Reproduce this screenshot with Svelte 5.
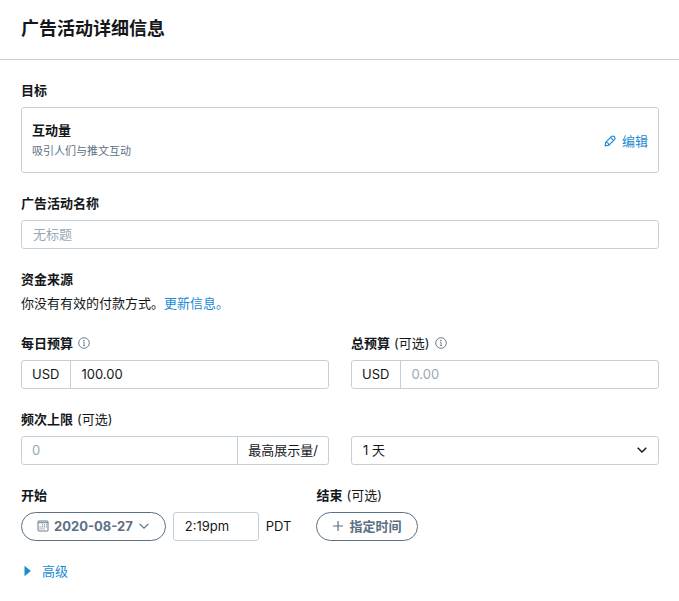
<script lang="ts">
	let campaignName = $state('');
	let dailyBudget = $state('100.00');
	let totalBudget = $state('');
	let frequencyCap = $state('');
	let period = $state('1');
	let startTime = $state('2:19pm');

	const periods = [
		{ value: '1', label: '1 天' },
		{ value: '7', label: '7 天' },
		{ value: '30', label: '30 天' }
	];
</script>

{#snippet infoIcon()}
	<svg class="info-icon" viewBox="0 0 12 12" width="12" height="12" aria-hidden="true">
		<circle cx="6" cy="6" r="5.3" fill="none" stroke="currentColor" stroke-width="0.9" />
		<path d="M5 5.2h1.1v3.3M5 8.6h2.2" fill="none" stroke="currentColor" stroke-width="0.8" />
		<circle cx="5.9" cy="3.5" r="0.7" fill="currentColor" />
	</svg>
{/snippet}

<div class="page">
	<header class="page-header">
		<h1>广告活动详细信息</h1>
	</header>

	<main class="form">
		<section class="field">
			<h2 class="label">目标</h2>
			<div class="objective">
				<div>
					<div class="objective-title">互动量</div>
					<div class="objective-text">吸引人们与推文互动</div>
				</div>
				<button class="edit-btn" type="button">
					<svg viewBox="0 0 12 12" width="12" height="12" aria-hidden="true">
						<g fill="none" stroke="currentColor" stroke-width="1.1" stroke-linejoin="round">
							<path d="M1.1 10.9l.6-3.6 5.8-5.8a1.9 1.9 0 0 1 2.7 0l.3.3a1.9 1.9 0 0 1 0 2.7l-5.8 5.8z" />
							<path d="M7.1 3.1l1.8 1.8M1.7 7.3c1.6 0 3 1.4 3 3" />
						</g>
					</svg>
					<span>编辑</span>
				</button>
			</div>
		</section>

		<div class="field">
			<label class="label" for="name">广告活动名称</label>
			<input id="name" class="control" type="text" placeholder="无标题" bind:value={campaignName} />
		</div>

		<section class="funding">
			<h2 class="label">资金来源</h2>
			<p>你没有有效的付款方式。<a href="#payment">更新信息。</a></p>
		</section>

		<div class="columns">
			<div class="field">
				<label class="label" for="daily">每日预算 {@render infoIcon()}</label>
				<div class="group">
					<span class="addon">USD</span>
					<input id="daily" type="text" bind:value={dailyBudget} />
				</div>
			</div>
			<div class="field">
				<label class="label" for="total">
					总预算 <span class="optional">(可选)</span>
					{@render infoIcon()}
				</label>
				<div class="group">
					<span class="addon">USD</span>
					<input id="total" type="text" placeholder="0.00" bind:value={totalBudget} />
				</div>
			</div>
		</div>

		<div class="field">
			<label class="label" for="cap">频次上限 <span class="optional">(可选)</span></label>
			<div class="columns">
				<div class="group">
					<input id="cap" type="text" placeholder="0" bind:value={frequencyCap} />
					<span class="addon addon-end">最高展示量/</span>
				</div>
				<div class="select-wrapper">
					<select class="control" aria-label="频次上限" bind:value={period}>
						{#each periods as item}
							<option value={item.value}>{item.label}</option>
						{/each}
					</select>
					<svg class="chevron" viewBox="0 0 12 12" width="12" height="12" aria-hidden="true">
						<path d="M1.7 3.8L6 8.1l4.3-4.3" fill="none" stroke="currentColor" stroke-width="1.4" />
					</svg>
				</div>
			</div>
		</div>

		<div class="schedule">
			<div class="field">
				<label class="label" for="start">开始</label>
				<div class="start-row">
					<button id="start" class="pill" type="button">
						<svg viewBox="0 0 12 12" width="12" height="12" aria-hidden="true">
							<rect x="1" y="1" width="10" height="10" rx="0.6" fill="none" stroke="currentColor" stroke-width="0.9" />
							<path d="M1 2.7h10" stroke="currentColor" stroke-width="0.9" />
							<path d="M4.8 4.9h5M2.5 6.9h7.3M2.5 8.9h5" stroke="currentColor" stroke-dasharray="1.1 1" />
						</svg>
						<span>2020-08-27</span>
						<svg viewBox="0 0 12 12" width="12" height="12" aria-hidden="true">
							<path d="M1.6 3.9L6 8.2l4.4-4.3" fill="none" stroke="currentColor" stroke-width="1.2" />
						</svg>
					</button>
					<input class="control time" type="text" aria-label="开始时间" bind:value={startTime} />
					<span class="zone">PDT</span>
				</div>
			</div>
			<div class="field">
				<label class="label" for="end">结束 <span class="optional">(可选)</span></label>
				<button id="end" class="pill" type="button">
					<svg viewBox="0 0 12 12" width="12" height="12" aria-hidden="true">
						<path d="M6 1v10M1 6h10" stroke="currentColor" stroke-width="1.2" />
					</svg>
					<span>指定时间</span>
				</button>
			</div>
		</div>

		<button class="advanced" type="button" aria-expanded="false">
			<svg viewBox="0 0 7 12" width="7" height="12" aria-hidden="true">
				<path d="M0.5 0.8L6.8 6 0.5 11.2z" fill="currentColor" />
			</svg>
			<span>高级</span>
		</button>
	</main>
</div>

<style>
	.page {
		--text: #14171a;
		--muted: #5b7083;
		--border: #c3d0da;
		--blue: #1a8ad6;
		min-height: 100vh;
		background: #fff;
		color: var(--text);
		font-family: Inter, 'Noto Sans CJK SC', sans-serif;
		font-size: 13px;
		line-height: 20px;
	}

	.page *,
	.page {
		box-sizing: border-box;
	}

	button,
	input,
	select {
		font: inherit;
		color: inherit;
		margin: 0;
	}

	button {
		cursor: pointer;
	}

	.page-header {
		padding: 16px 20px 17px 21px;
		border-bottom: 1px solid var(--border);
	}

	h1 {
		margin: 0;
		font-size: 18px;
		line-height: 26px;
		font-weight: 700;
	}

	.form {
		display: flex;
		flex-direction: column;
		gap: 20px;
		padding: 20px 20px 20px 21px;
	}

	.field {
		display: flex;
		flex-direction: column;
		gap: 7px;
		min-width: 0;
	}

	.label {
		display: flex;
		align-items: center;
		gap: 4px;
		margin: 0;
		font-size: 13px;
		line-height: 20px;
		font-weight: 700;
	}

	.optional {
		font-weight: 400;
	}

	.info-icon {
		margin-left: 1px;
		color: var(--muted);
	}

	.objective {
		display: flex;
		align-items: center;
		justify-content: space-between;
		padding: 12px 10px 11px;
		border: 1px solid var(--border);
		border-radius: 3px;
	}

	.objective-title {
		font-weight: 700;
	}

	.objective-text {
		margin-top: 1px;
		color: var(--muted);
		font-size: 11px;
	}

	.edit-btn,
	.advanced {
		display: flex;
		align-items: center;
		gap: 6px;
		padding: 0;
		border: 0;
		background: none;
		color: var(--blue);
	}

	.control,
	.group {
		width: 100%;
		height: 29px;
		border: 1px solid var(--border);
		border-radius: 3px;
		background: #fff;
	}

	.control {
		padding: 0 11px 2px;
	}

	input::placeholder {
		color: #97a9b6;
		opacity: 1;
	}

	.funding {
		display: flex;
		flex-direction: column;
		gap: 4px;
	}

	p {
		margin: 0;
	}

	a {
		color: var(--blue);
		text-decoration: none;
	}

	.columns {
		display: grid;
		grid-template-columns: 1fr 1fr;
		gap: 22px;
	}

	.group {
		display: flex;
		min-width: 0;
	}

	.group input {
		flex: 1;
		min-width: 0;
		padding: 0 10px 1px;
		border: 0;
		background: none;
	}

	.addon {
		display: flex;
		align-items: center;
		padding: 0 11px 1px 10px;
		border-right: 1px solid var(--border);
	}

	.addon-end {
		padding: 0 10px 1px;
		border-right: 0;
		border-left: 1px solid var(--border);
	}

	.select-wrapper {
		position: relative;
	}

	select {
		display: block;
		appearance: none;
	}

	.chevron {
		position: absolute;
		top: 8px;
		right: 11px;
		pointer-events: none;
	}

	.schedule {
		display: flex;
		flex-wrap: wrap;
		gap: 25px;
	}

	.start-row {
		display: flex;
		align-items: center;
		gap: 7px;
	}

	.pill {
		display: flex;
		align-items: center;
		gap: 5px;
		height: 29px;
		padding: 0 15px 1px;
		border: 1px solid var(--muted);
		border-radius: 15px;
		background: #fff;
		color: var(--muted);
		font-weight: 700;
	}

	.time {
		width: 86px;
	}

	.zone {
		padding-bottom: 2px;
	}

	.advanced {
		align-self: flex-start;
		gap: 11px;
		padding-left: 3px;
	}
</style>
